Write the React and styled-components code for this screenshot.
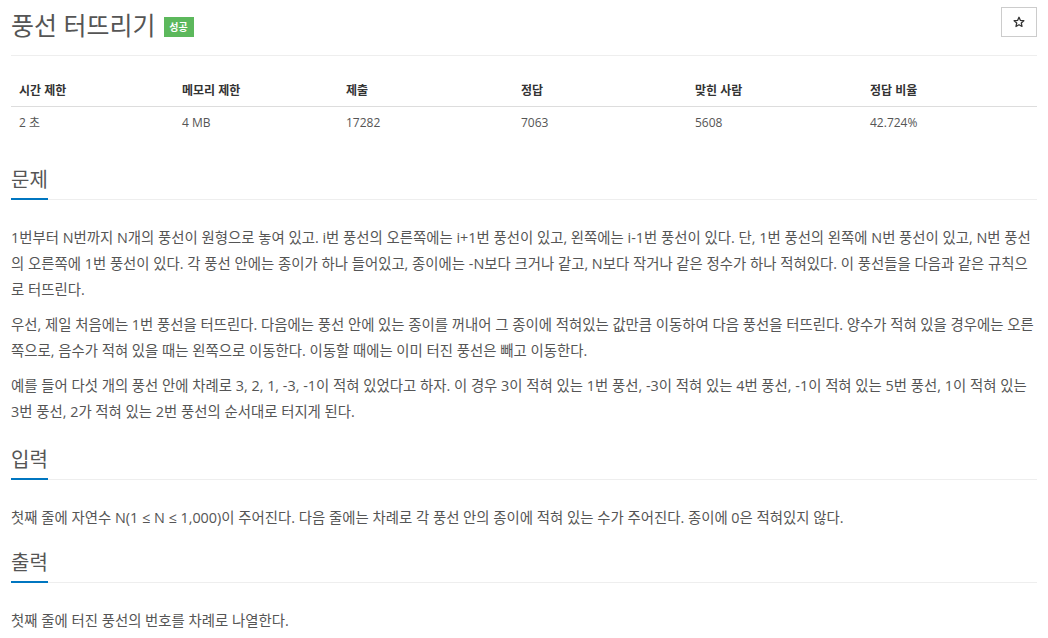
import React from 'react'
import styled, { createGlobalStyle } from 'styled-components'

const GlobalStyle = createGlobalStyle`
    body {
        margin: 0;
        background: #fff;
        font-family: 'Open Sans', 'Noto Sans CJK KR', sans-serif;
        color: #555;
    }
`

const Page = styled.div`
    padding: 0 11px;
`

const Header = styled.div`
    display: flex;
    justify-content: space-between;
    align-items: flex-start;
    padding-top: 7px;
    height: 48px;
    border-bottom: 1px solid #eee;
`

const Title = styled.h1`
    margin: 3px 0 0;
    font-size: 25px;
    font-weight: 400;
    line-height: 30px;
    color: #555;
    display: flex;
    align-items: center;
`

const Badge = styled.span`
    display: inline-flex;
    align-items: center;
    justify-content: center;
    margin-left: 8px;
    margin-top: 3px;
    width: 30px;
    height: 20px;
    background: #5cb85c;
    color: #fff;
    font-size: 10px;
    font-weight: 700;
`

const StarButton = styled.button`
    display: flex;
    align-items: center;
    justify-content: center;
    width: 36px;
    height: 30px;
    border: 1px solid #ccc;
    background: #fff;
    padding: 0;
    cursor: pointer;
`

const Table = styled.table`
    width: 100%;
    margin-top: 20px;
    border-collapse: collapse;
    font-size: 12px;
    table-layout: fixed;
`

const Th = styled.th`
    text-align: left;
    font-weight: 700;
    color: #333;
    padding: 6px 8px;
    line-height: 18px;
    border-bottom: 1px solid #ddd;
    width: ${props => (props.w ? `${props.w}px` : 'auto')};
`

const Td = styled.td`
    padding: 7px 8px;
    line-height: 18px;
    color: #555;
`

const Section = styled.section`
    margin-top: ${props => props.top}px;
`

const Headline = styled.div`
    border-bottom: 1px solid #eee;
    margin-bottom: 25px;
`

const HeadText = styled.h2`
    display: inline-block;
    margin: 0 0 -1px;
    padding-bottom: 4px;
    font-size: 20px;
    font-weight: 400;
    line-height: 28px;
    color: #555;
    border-bottom: 2px solid #0076c0;
`

const Para = styled.p`
    margin: 0 0 9px;
    font-size: 14.4px;
    line-height: 26px;
    color: #555;
`

const StarIcon = () => (
    <svg width="12" height="12" viewBox="0 0 24 24" fill="none" stroke="#333" strokeWidth="2.6" strokeLinejoin="round">
        <polygon points="12,2.5 14.9,8.8 21.7,9.5 16.6,14.1 18,20.9 12,17.5 6,20.9 7.4,14.1 2.3,9.5 9.1,8.8" />
    </svg>
)

// column widths exclude the 8px side padding
const stats = [
    { label: '시간 제한', value: '2 초', w: 147 },
    { label: '메모리 제한', value: '4 MB', w: 148 },
    { label: '제출', value: '17282', w: 159 },
    { label: '정답', value: '7063', w: 158 },
    { label: '맞힌 사람', value: '5608', w: 159 },
    { label: '정답 비율', value: '42.724%' },
]

const App = () => (
    <Page>
        <GlobalStyle />
        <Header>
            <Title>
                풍선 터뜨리기<Badge>성공</Badge>
            </Title>
            <StarButton>
                <StarIcon />
            </StarButton>
        </Header>
        <Table>
            <thead>
                <tr>
                    {stats.map(s => (
                        <Th key={s.label} w={s.w}>
                            {s.label}
                        </Th>
                    ))}
                </tr>
            </thead>
            <tbody>
                <tr>
                    {stats.map(s => (
                        <Td key={s.label}>{s.value}</Td>
                    ))}
                </tr>
            </tbody>
        </Table>
        <Section top={27}>
            <Headline>
                <HeadText>문제</HeadText>
            </Headline>
            <Para>
                1번부터 N번까지 N개의 풍선이 원형으로 놓여 있고. i번 풍선의 오른쪽에는 i+1번 풍선이 있고, 왼쪽에는 i-1번 풍선이 있다. 단, 1번 풍선의 왼쪽에 N번 풍선이 있고, N번 풍선의 오른쪽에 1번 풍선이 있다. 각 풍선 안에는 종이가 하나 들어있고, 종이에는 -N보다 크거나 같고, N보다 작거나 같은 정수가 하나 적혀있다. 이 풍선들을 다음과 같은 규칙으로 터뜨린다.
            </Para>
            <Para>
                우선, 제일 처음에는 1번 풍선을 터뜨린다. 다음에는 풍선 안에 있는 종이를 꺼내어 그 종이에 적혀있는 값만큼 이동하여 다음 풍선을 터뜨린다. 양수가 적혀 있을 경우에는 오른쪽으로, 음수가 적혀 있을 때는 왼쪽으로 이동한다. 이동할 때에는 이미 터진 풍선은 빼고 이동한다.
            </Para>
            <Para>
                예를 들어 다섯 개의 풍선 안에 차례로 3, 2, 1, -3, -1이 적혀 있었다고 하자. 이 경우 3이 적혀 있는 1번 풍선, -3이 적혀 있는 4번 풍선, -1이 적혀 있는 5번 풍선, 1이 적혀 있는 3번 풍선, 2가 적혀 있는 2번 풍선의 순서대로 터지게 된다.
            </Para>
        </Section>
        <Section top={21}>
            <Headline>
                <HeadText>입력</HeadText>
            </Headline>
            <Para>
                첫째 줄에 자연수 N(1 ≤ N ≤ 1,000)이 주어진다. 다음 줄에는 차례로 각 풍선 안의 종이에 적혀 있는 수가 주어진다. 종이에 0은 적혀있지 않다.
            </Para>
        </Section>
        <Section top={18}>
            <Headline>
                <HeadText>출력</HeadText>
            </Headline>
            <Para>첫째 줄에 터진 풍선의 번호를 차례로 나열한다.</Para>
        </Section>
    </Page>
)

export default App
